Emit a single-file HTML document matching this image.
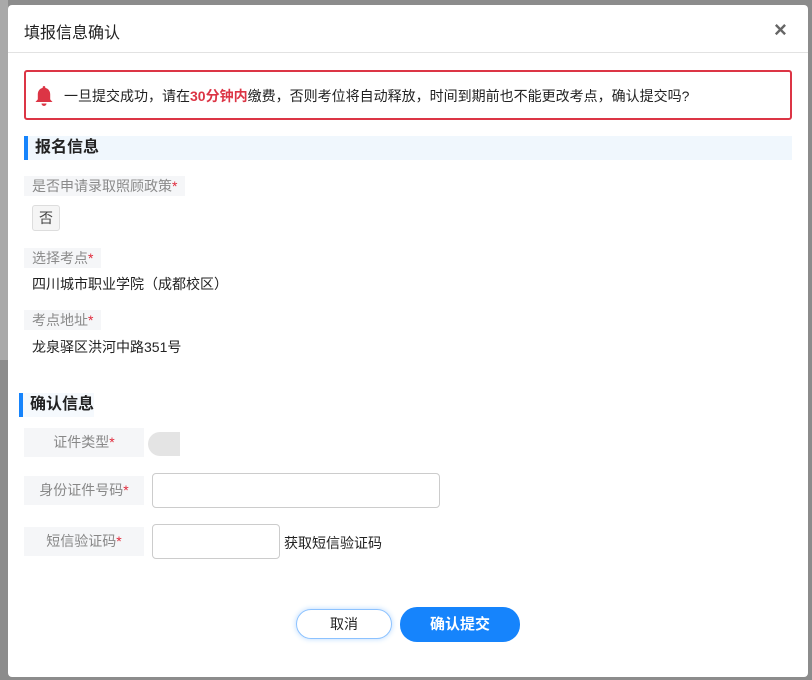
<!DOCTYPE html>
<html><head><meta charset="utf-8"><style>
*{margin:0;padding:0;box-sizing:border-box}
body{width:812px;height:680px;background:#8c8c8c;position:relative;overflow:hidden;font-family:"Liberation Sans","Noto Sans CJK SC",sans-serif;font-size:14px;color:#222}
.bgl{position:absolute;left:0;top:0;width:8px;height:360px;background:#a9a9a9}
.m{position:absolute;left:8px;top:5px;width:800px;height:672px;background:#fff;border-radius:4px}
.hd{height:48px;border-bottom:1px solid #e2e2e2;position:relative}
.hd .t{position:absolute;left:16px;top:14px;font-size:16px;color:#222}
.hd .x{position:absolute;left:766px;top:12px;font-size:22px;color:#666;font-weight:bold}
.abs{position:absolute}
.alert{left:16px;top:65px;width:768px;height:50px;border:2px solid #dc3545;border-radius:3px}
.alert .tx{position:absolute;left:38px;top:14px;font-size:14px;color:#222}
.sec{height:24px;background:#f0f7fd;border-left:4px solid #1684fc;font-size:16px;font-weight:bold;padding-left:7px;line-height:24px}
.lb{background:#f5f6f8;color:#8a8a8a;font-size:14px;line-height:20px;padding:0 8px}
.lb b{color:#e02a3b;font-weight:normal}
.lb2{background:#f5f6f8;color:#888;font-size:14px;height:29px;line-height:29px;width:120px;text-align:center}
.lb2 b{color:#e02a3b;font-weight:normal}
.in{border:1px solid #ccc;border-radius:4px;background:#fff}
.btn{border-radius:17px;text-align:center;font-size:14px}
</style></head><body>
<div class="bgl"></div>
<div class="m">
<div class="hd"><div class="t">填报信息确认</div><div class="x">×</div></div>
<div class="abs alert">
<svg class="abs" style="left:8px;top:13px" width="20" height="22" viewBox="0 0 20 22"><path d="M10 1c-.8 0-1.3.6-1.3 1.3v.6C5.5 3.6 3.8 6.3 3.8 9.4v5L1.5 17h17l-2.3-2.6v-5c0-3.1-1.7-5.8-4.9-6.5v-.6C11.3 1.6 10.8 1 10 1z M7.5 18.5a2.5 2.5 0 0 0 5 0z" fill="#dc3545"/></svg>
<div class="tx">一旦提交成功，请在<b style="color:#dc3545">30分钟内</b>缴费，否则考位将自动释放，时间到期前也不能更改考点，确认提交吗?</div>
</div>
<div class="abs sec" style="left:16px;top:131px;width:768px">报名信息</div>
<div class="abs lb" style="left:16px;top:171px">是否申请录取照顾政策<b>*</b></div>
<div class="abs" style="left:24px;top:200px;width:28px;height:26px;border:1px solid #ddd;background:#f5f5f5;border-radius:3px;text-align:center;line-height:24px;color:#444">否</div>
<div class="abs lb" style="left:16px;top:243px">选择考点<b>*</b></div>
<div class="abs" style="left:24px;top:269px">四川城市职业学院（成都校区）</div>
<div class="abs lb" style="left:16px;top:305px">考点地址<b>*</b></div>
<div class="abs" style="left:24px;top:332px">龙泉驿区洪河中路351号</div>
<div class="abs sec" style="left:11px;top:388px;width:75px;background:#f5f9fd">确认信息</div>
<div class="abs lb2" style="left:16px;top:423px">证件类型<b>*</b></div>
<div class="abs" style="left:140px;top:427px;width:32px;height:24px;background:#e4e4e4;border-radius:12px 0 0 12px"></div>
<div class="abs lb2" style="left:16px;top:471px">身份证件号码<b>*</b></div>
<div class="abs in" style="left:144px;top:468px;width:288px;height:35px"></div>
<div class="abs lb2" style="left:16px;top:522px">短信验证码<b>*</b></div>
<div class="abs in" style="left:144px;top:519px;width:128px;height:35px"></div>
<div class="abs" style="left:276px;top:528px">获取短信验证码</div>
<div class="abs btn" style="left:288px;top:604px;width:96px;height:30px;border:1px solid #8cc2ff;line-height:28px;box-shadow:0 0 6px #b6d8ff">取消</div>
<div class="abs btn" style="left:392px;top:602px;width:120px;height:35px;background:#1684fc;color:#fff;line-height:35px;font-weight:bold;font-size:15px">确认提交</div>
</div>
</body></html>
